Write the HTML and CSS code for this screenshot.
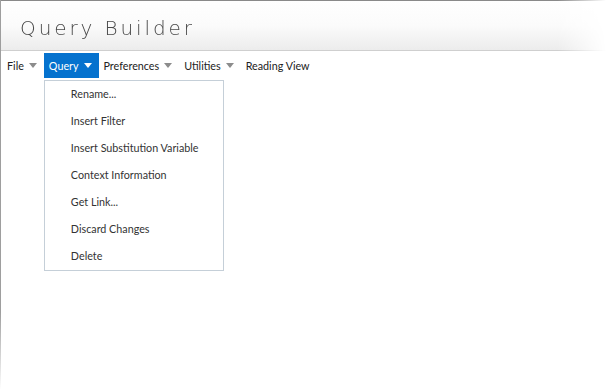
FILE: index.html
```html
<!DOCTYPE html>
<html lang="en">
<head>
  <meta charset="UTF-8">
  <title>Query Builder</title>
  <link rel="stylesheet" href="styles.css">
</head>
<body>
  <div class="app">
    <header class="header">
      <h1 class="title">Query Builder</h1>
    </header>

    <nav class="menubar">
      <div class="menu-item">File <span class="caret"></span></div>
      <div class="menu-item open">
        Query <span class="caret"></span>
        <ul class="dropdown">
          <li>Rename...</li>
          <li>Insert Filter</li>
          <li>Insert Substitution Variable</li>
          <li>Context Information</li>
          <li>Get Link...</li>
          <li>Discard Changes</li>
          <li>Delete</li>
        </ul>
      </div>
      <div class="menu-item">Preferences <span class="caret"></span></div>
      <div class="menu-item">Utilities <span class="caret"></span></div>
      <div class="menu-item">Reading View</div>
    </nav>
  </div>
</body>
</html>
```

FILE: styles.css
```css
:root {
  --blue: #0572ce;
  --menu-text: #222222;
  --caret: #8c8c8c;
}

html, body {
  margin: 0;
  padding: 0;
  height: 100%;
  background: #ffffff;
}

body {
  font-family: Lato, 'Liberation Sans', sans-serif;
  font-size: 10.75px;
  color: var(--menu-text);
}

.app {
  height: 100%;
  box-sizing: border-box;
  border-left: 1px solid;
  border-image: linear-gradient(to bottom, #9e9e9e 80%, rgba(158,158,158,0) 100%) 1;
}

.header {
  height: 51px;
  box-sizing: border-box;
  border-top: 1px solid #8a8a8a;
  border-bottom: 1px solid #cfcfcf;
  background: linear-gradient(to bottom, #ffffff 0%, #fbfbfb 50%, #ececec 100%);
  -webkit-mask-image: linear-gradient(to right, #000 92%, transparent 100%);
  mask-image: linear-gradient(to right, #000 92%, transparent 100%);
  display: flex;
  align-items: center;
  padding: 4px 0 0 19px;
}

.title {
  margin: 0;
  font-family: 'DejaVu Sans', sans-serif;
  font-weight: 200;
  font-size: 20px;
  letter-spacing: 2.9px;
  color: #4a4a4a;
}

.menubar {
  display: flex;
  align-items: center;
  height: 25px;
  margin-top: 2px;
  padding-left: 1px;
}

.menu-item {
  position: relative;
  display: flex;
  align-items: center;
  gap: 5px;
  height: 100%;
  padding: 0 7px 0 5px;
  cursor: pointer;
}

.caret {
  width: 0;
  height: 0;
  border-left: 4px solid transparent;
  border-right: 4px solid transparent;
  border-top: 5px solid var(--caret);
}

.menu-item.open {
  background: var(--blue);
  color: #ffffff;
}

.menu-item.open .caret {
  border-top-color: #ffffff;
}

.dropdown {
  position: absolute;
  top: 27px;
  left: 0;
  width: 178px;
  margin: 0;
  padding: 0;
  list-style: none;
  background: #ffffff;
  border: 1px solid #c5cfd8;
  color: #333333;
}

.dropdown li {
  height: 27px;
  line-height: 26px;
  padding-left: 26px;
  white-space: nowrap;
}
```
